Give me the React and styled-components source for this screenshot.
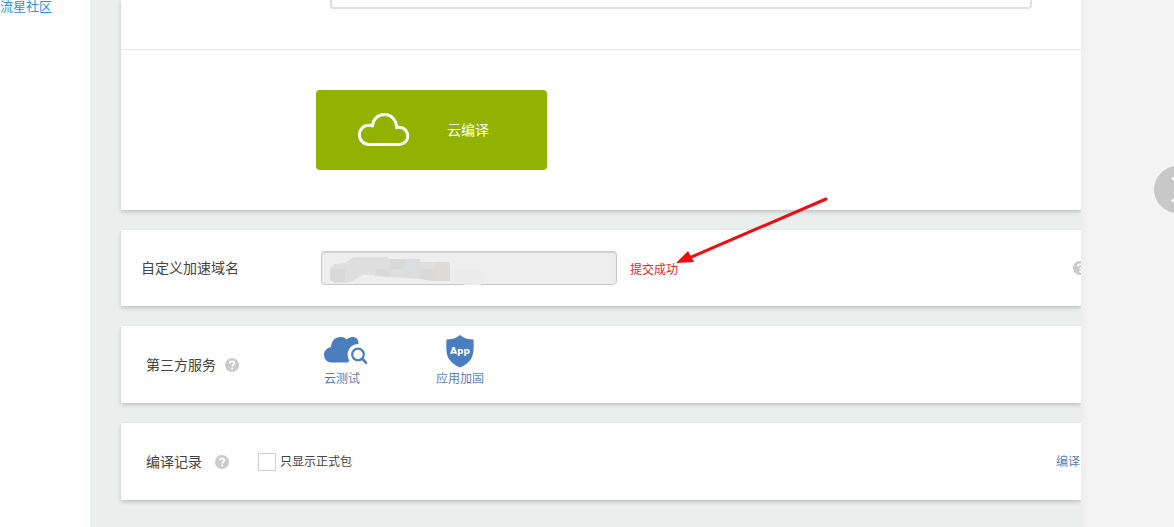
import React from "react";
import styled, { createGlobalStyle } from "styled-components";

const App = () => {
  return (
    <>
      <GlobalStyle />
      <Page>
        <Sidebar>
          <SidebarLink href="#community">流星社区</SidebarLink>
        </Sidebar>

        <Main>
          <Card>
            <SelectRow>
              <Select aria-label="编译">
                <option></option>
              </Select>
            </SelectRow>
            <BuildRow>
              <BuildButton type="button">
                <CloudOutline />
                <span>云编译</span>
              </BuildButton>
            </BuildRow>
          </Card>

          <RowCard $height={76} $inset={20}>
            <DomainLabel htmlFor="domain">自定义加速域名</DomainLabel>
            <DomainField>
              <DomainInput id="domain" type="text" disabled />
              <Mosaic />
            </DomainField>
            <Status>
              提交成功
              <Arrow />
            </Status>
            <EdgeHelp>
              <HelpIcon />
            </EdgeHelp>
          </RowCard>

          <RowCard $height={77} $inset={25}>
            <ServiceHead>
              <Label>第三方服务</Label>
              <HelpIcon />
            </ServiceHead>
            <Services>
              <Service href="#test">
                <CloudSearch />
                云测试
              </Service>
              <Service href="#protect">
                <Shield />
                应用加固
              </Service>
            </Services>
          </RowCard>

          <RowCard $height={77} $inset={25}>
            <RecordHead>
              <Label>编译记录</Label>
              <HelpIcon />
            </RecordHead>
            <Check>
              <Checkbox type="checkbox" />
              只显示正式包
            </Check>
            <RecordLink href="#records">编译</RecordLink>
          </RowCard>
        </Main>

        <Aside>
          <NextButton type="button" aria-label="Next">
            <svg width="47" height="47" viewBox="0 0 47 47" fill="none">
              <path d="M18 11.500L30 23.500L18 35.500" stroke="#fff" strokeWidth="2.200" />
            </svg>
          </NextButton>
        </Aside>
      </Page>
    </>
  );
};

export default App;

const CloudOutline = () => (
  <svg width="54" height="36" viewBox="0 0 54 36" fill="none">
    <path
      d="M12 32.500a9.600 9.600 0 0 1 0-19.300q1.800 0 3.500.7C16 7 21 2.500 27.300 2.500c7 0 12.300 5.500 12.300 13.200q1-.4 2.600-.4a8.600 8.600 0 0 1 0 17.200z"
      stroke="#fff"
      strokeWidth="3"
      strokeLinejoin="round"
    />
  </svg>
);

const HelpIcon = () => (
  <svg width="14" height="14" viewBox="0 0 14 14" fill="none">
    <circle cx="7" cy="7" r="7" fill="#cacaca" />
    <path
      d="M4.700 5.500c0-1.400 1-2.200 2.300-2.200s2.300.8 2.300 2c0 1.500-2 1.500-2 3.200"
      stroke="#fff"
      strokeWidth="1.800"
    />
    <circle cx="7.200" cy="10.600" r="1.100" fill="#fff" />
  </svg>
);

const CloudSearch = () => (
  <svg width="50" height="34" viewBox="0 0 50 34" fill="none">
    <path
      d="M14 27.500a7.500 7.500 0 0 1-7-7.500c0-4 2.500-7 7-8C14.500 5.500 18 2 23.500 2c2.800 0 4.700.8 6.200 2.600C31 3 33 2 35.500 2c3.800 0 6 2.600 6 5.700 0 1.500-.4 2.800-1 4.300L31 27.500z"
      fill="#4a7ebf"
    />
    <circle cx="41" cy="19.500" r="10.500" fill="#fff" />
    <circle cx="41" cy="19.500" r="5.800" stroke="#4a7ebf" strokeWidth="2.200" />
    <path d="M45.500 24L50 28.500" stroke="#4a7ebf" strokeWidth="2.600" />
  </svg>
);

const Shield = () => (
  <svg width="28" height="34" viewBox="0 0 28 34">
    <path
      d="M14 0c3.500 3 8 4.500 13.500 4.500.5 9 .3 15-2.500 19.500-2.500 4-6.500 6.500-11 8.500-4.500-2-8.500-4.500-11-8.500C.2 19.500 0 13.500.5 4.500 6 4.500 10.500 3 14 0z"
      fill="#4a7ebf"
    />
    <text
      x="14"
      y="19"
      fill="#fff"
      fontSize="9"
      fontWeight="700"
      fontFamily="'DejaVu Sans', sans-serif"
      textAnchor="middle"
    >
      App
    </text>
  </svg>
);

const Mosaic = () => (
  <MosaicSvg width="160" height="34" viewBox="0 0 160 34">
    <path d="M9 17l4-4 11-1 4-3 5-3h33l3 2h30v3h30v19h-15l-15-2-30-2-7-2H42l-4 2-6 4-6 2H14l-5-3z" fill="#dedede" />
    <path d="M9 18h15v13H13l-4-3z" fill="#d9d9d9" />
    <path d="M54 18h15v8l-15-1z" fill="#dadada" />
    <path d="M69 8h15v10H69z" fill="#d9d9d9" />
    <path d="M84 8h15v18H84z" fill="#dcdde0" />
    <path d="M99 18h15v12l-9-1-6-2z" fill="#dadada" />
    <path d="M114 11h15v19h-15z" fill="#dcdbda" />
    <path d="M129 19h33v15h-18l-5-3h-10z" fill="#ececec" />
  </MosaicSvg>
);

const Arrow = () => (
  <ArrowSvg width="154" height="70" viewBox="0 0 154 70">
    <path d="M151 3L14 62" stroke="#f00c12" strokeWidth="3" strokeLinecap="round" />
    <path d="M1 67L13 55L19 66z" fill="#f00c12" />
  </ArrowSvg>
);

const GlobalStyle = createGlobalStyle`
  * {
    box-sizing: border-box;
  }

  body {
    margin: 0;
    color: #444;
    font-family: "Liberation Sans", "Noto Sans CJK SC", sans-serif;
    font-size: 14px;
    line-height: 20px;
  }

  button, input, select {
    font: inherit;
  }

  a {
    text-decoration: none;
  }

  svg {
    display: block;
    flex-shrink: 0;
  }
`;

const Page = styled.div`
  display: grid;
  grid-template-columns: 90px minmax(0, 1fr) 93px;
  min-height: 100vh;
  overflow: hidden;
`;

const Sidebar = styled.aside`
  background: linear-gradient(to left, #fcfcfc 6px, #fff 6px);
`;

const SidebarLink = styled.a`
  display: block;
  color: #2f8fe8;
  font-size: 13px;
  line-height: 14px;
`;

const Main = styled.main`
  display: flex;
  flex-direction: column;
  gap: 20px;
  padding-left: 31px;
  background: #eaeeed;
  overflow: hidden;
`;

const Card = styled.section`
  background: #fff;
  box-shadow: 0 2px 4px rgba(0, 0, 0, 0.18);
`;

const RowCard = styled(Card)`
  display: flex;
  align-items: center;
  min-height: ${({ $height }) => $height}px;
  padding-left: ${({ $inset }) => $inset}px;
`;

const SelectRow = styled.div`
  display: flex;
  align-items: flex-end;
  height: 50px;
  padding: 0 49px 40px 209px;
  border-bottom: 1px solid #e6e6e6;
`;

const Select = styled.select`
  flex: 1;
  flex-shrink: 0;
  height: 34px;
  border: 2px solid #dedede;
  border-radius: 4px;
  background: #fff;
  appearance: none;
`;

const BuildRow = styled.div`
  padding: 40px 0 40px 195px;
`;

const BuildButton = styled.button`
  display: flex;
  align-items: center;
  gap: 36px;
  width: 231px;
  height: 80px;
  padding: 0 41px;
  border: 0;
  border-radius: 4px;
  background: #91b300;
  color: #fff;
`;

const Label = styled.span`
  white-space: nowrap;
`;

const DomainLabel = styled.label`
  width: 180px;
`;

const DomainField = styled.div`
  position: relative;
  width: 296px;
`;

const DomainInput = styled.input`
  display: block;
  width: 100%;
  height: 34px;
  padding: 0 12px;
  border: 1px solid #c8c8c8;
  border-radius: 4px;
  background: #eee;
  box-shadow: inset 0 1px 1px rgba(0, 0, 0, 0.1);
`;

const MosaicSvg = styled.svg`
  position: absolute;
  top: 0;
  left: 0;
`;

const Status = styled.span`
  position: relative;
  padding: 4px 0 0 13px;
  color: #e02a2a;
  font-size: 12px;
`;

const ArrowSvg = styled.svg`
  position: absolute;
  right: -151px;
  bottom: 14px;
  z-index: 1;
`;

const EdgeHelp = styled.span`
  margin-left: auto;
  margin-right: -6px;
`;

const ServiceHead = styled.div`
  display: flex;
  align-items: center;
  gap: 9px;
  width: 171px;
`;

const RecordHead = styled.div`
  display: flex;
  align-items: center;
  gap: 13px;
  width: 112px;
`;

const Services = styled.div`
  display: flex;
  gap: 68px;
  padding-bottom: 6px;
`;

const Service = styled.a`
  display: flex;
  flex-direction: column;
  align-items: center;
  width: 50px;
  color: #5b7fb8;
  font-size: 12px;
  white-space: nowrap;
`;

const Check = styled.label`
  display: flex;
  align-items: center;
  gap: 4px;
  font-size: 12px;
`;

const Checkbox = styled.input`
  width: 18px;
  height: 18px;
  margin: 0;
  border: 1px solid #d0d0d0;
  background: #fff;
  appearance: none;
`;

const RecordLink = styled.a`
  margin-left: auto;
  padding-right: 1px;
  color: #5b7fb8;
  font-size: 12px;
`;

const Aside = styled.aside`
  position: relative;
  background: linear-gradient(to right, #eeeeee, #f4f4f4 9px);
`;

const NextButton = styled.button`
  position: absolute;
  top: 166px;
  right: -27px;
  padding: 0;
  border: 0;
  border-radius: 50%;
  background: #c8c8c8;
`;
